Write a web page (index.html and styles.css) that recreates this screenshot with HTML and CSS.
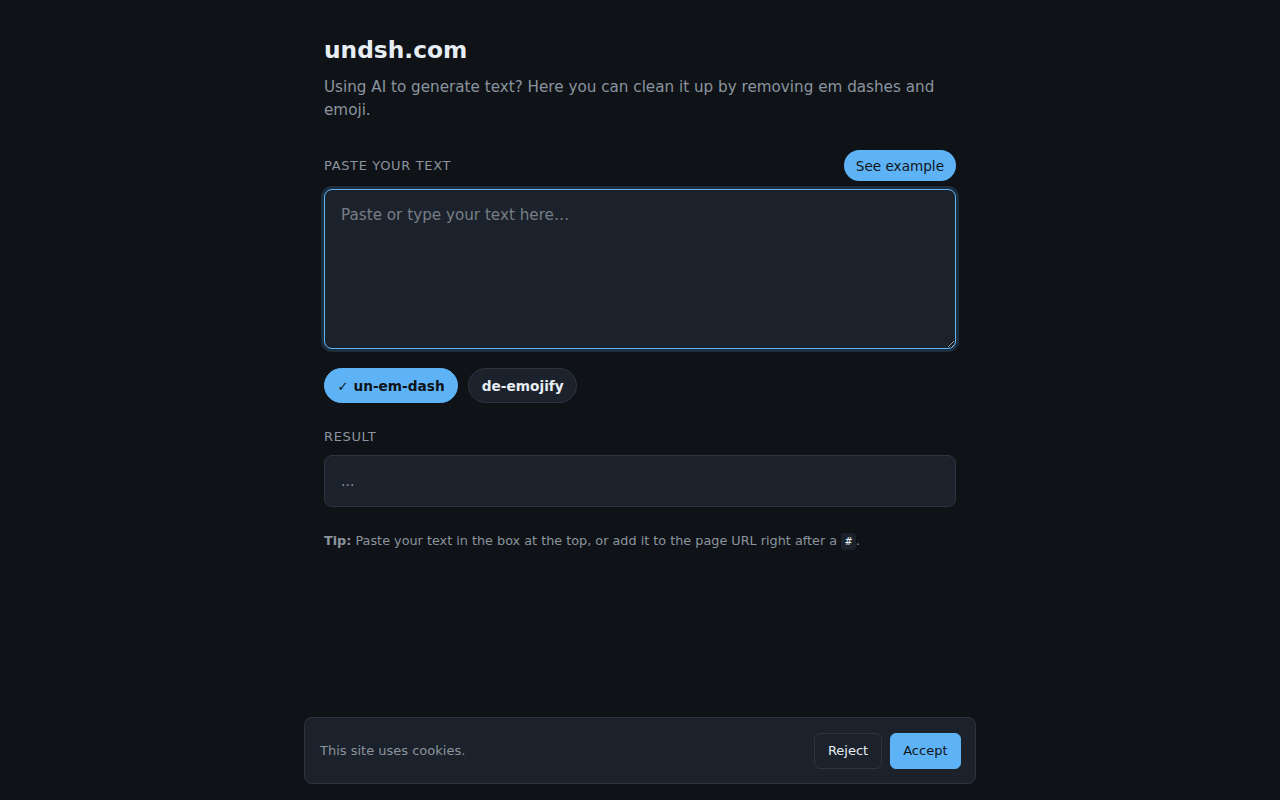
FILE: index.html
```html
<!DOCTYPE html>
<html lang="en">
<head>
<meta charset="utf-8">
<title>undsh.com</title>
<link rel="stylesheet" href="styles.css">
</head>
<body>
<main class="page">
  <h1 class="title">undsh.com</h1>
  <p class="lead">Using AI to generate text? Here you can clean it up by removing em dashes and emoji.</p>

  <div class="label-row">
    <label class="label" for="input">Paste your text</label>
    <button class="example-btn">See example</button>
  </div>
  <textarea id="input" class="input" placeholder="Paste or type your text here…"></textarea>

  <div class="toggles">
    <button class="toggle active"><span class="check">✓</span>un-em-dash</button>
    <button class="toggle">de-emojify</button>
  </div>

  <div class="label result-label">Result</div>
  <div class="result">...</div>

  <p class="tip"><strong>Tip:</strong> Paste your text in the box at the top, or add it to the page URL right after a <code>#</code>.</p>
</main>

<div class="cookie">
  <span class="cookie-text">This site uses cookies.</span>
  <div class="cookie-actions">
    <button class="btn-reject">Reject</button>
    <button class="btn-accept">Accept</button>
  </div>
</div>
</body>
</html>
```

FILE: styles.css
```css
* { box-sizing: border-box; }
html, body { margin: 0; padding: 0; }
body {
  background: #0f1318;
  color: #e6edf3;
  font-family: "DejaVu Sans", sans-serif;
  min-height: 800px;
}
.page {
  width: 632px;
  margin: 0 auto;
  padding-top: 33px;
}
.title {
  margin: 0;
  font-size: 23.3px;
  line-height: 34px;
  font-weight: 700;
  color: #e6edf3;
}
.lead {
  margin: 9px 0 0;
  font-size: 15.2px;
  line-height: 23px;
  color: #8b949e;
}
.label-row {
  display: flex;
  justify-content: space-between;
  align-items: center;
  margin-top: 28px;
  height: 31px;
}
.label {
  font-size: 13px;
  letter-spacing: 0.05em;
  text-transform: uppercase;
  color: #8b949e;
}
.example-btn {
  font-family: inherit;
  font-size: 13.6px;
  height: 31px;
  padding: 0 12px;
  border: none;
  border-radius: 16px;
  background: #5eb3f6;
  color: #0f1318;
}
.input {
  display: block;
  width: 100%;
  height: 160px;
  margin-top: 8px;
  padding: 14px 16px;
  background: #1c222b;
  color: #e6edf3;
  font-family: inherit;
  font-size: 15.2px;
  line-height: 22px;
  border: 1px solid #5eb3f6;
  border-radius: 8px;
  box-shadow: 0 0 0 3px rgba(94, 179, 246, 0.18);
  outline: none;
  resize: vertical;
}
.input::placeholder { color: #777d85; }
.toggles {
  display: flex;
  gap: 10px;
  margin-top: 19px;
}
.toggle {
  font-family: inherit;
  font-size: 13.7px;
  font-weight: 700;
  height: 35px;
  padding: 0 12.5px;
  border-radius: 18px;
  border: 1px solid #2d343d;
  background: #1c222b;
  color: #e6edf3;
}
.toggle.active {
  background: #5eb3f6;
  border-color: #5eb3f6;
  color: #0f1318;
}
.check {
  font-weight: 400;
  font-size: 13px;
  margin-right: 5px;
}
.result-label {
  margin-top: 26px;
  line-height: 16px;
}
.result {
  margin-top: 10px;
  height: 52px;
  padding: 0 16px;
  display: flex;
  align-items: center;
  background: #1c222b;
  border: 1px solid #2d343d;
  border-radius: 8px;
  color: #8b949e;
  font-size: 14px;
}
.tip {
  margin: 24px 0 0;
  font-size: 12.8px;
  line-height: 20px;
  color: #8b949e;
}
.tip strong { color: #8b949e; }
.tip code {
  font-family: "DejaVu Sans Mono", monospace;
  font-size: 11px;
  background: #1c222b;
  color: #e6edf3;
  padding: 2px 4px;
  border-radius: 4px;
}
.cookie {
  position: fixed;
  left: 304px;
  bottom: 16px;
  width: 672px;
  height: 67px;
  display: flex;
  justify-content: space-between;
  align-items: center;
  padding: 0 14px 0 15px;
  background: #1c222b;
  border: 1px solid #2d343d;
  border-radius: 8px;
}
.cookie-text {
  font-size: 13px;
  color: #8b949e;
}
.cookie-actions {
  display: flex;
  gap: 8px;
}
.btn-reject, .btn-accept {
  font-family: inherit;
  font-size: 13px;
  height: 36px;
  padding: 0 12.5px;
  border-radius: 6px;
}
.btn-reject {
  background: #1c222b;
  border: 1px solid #2d343d;
  color: #e6edf3;
}
.btn-accept {
  background: #5eb3f6;
  border: 1px solid #5eb3f6;
  color: #0f1318;
}
```
